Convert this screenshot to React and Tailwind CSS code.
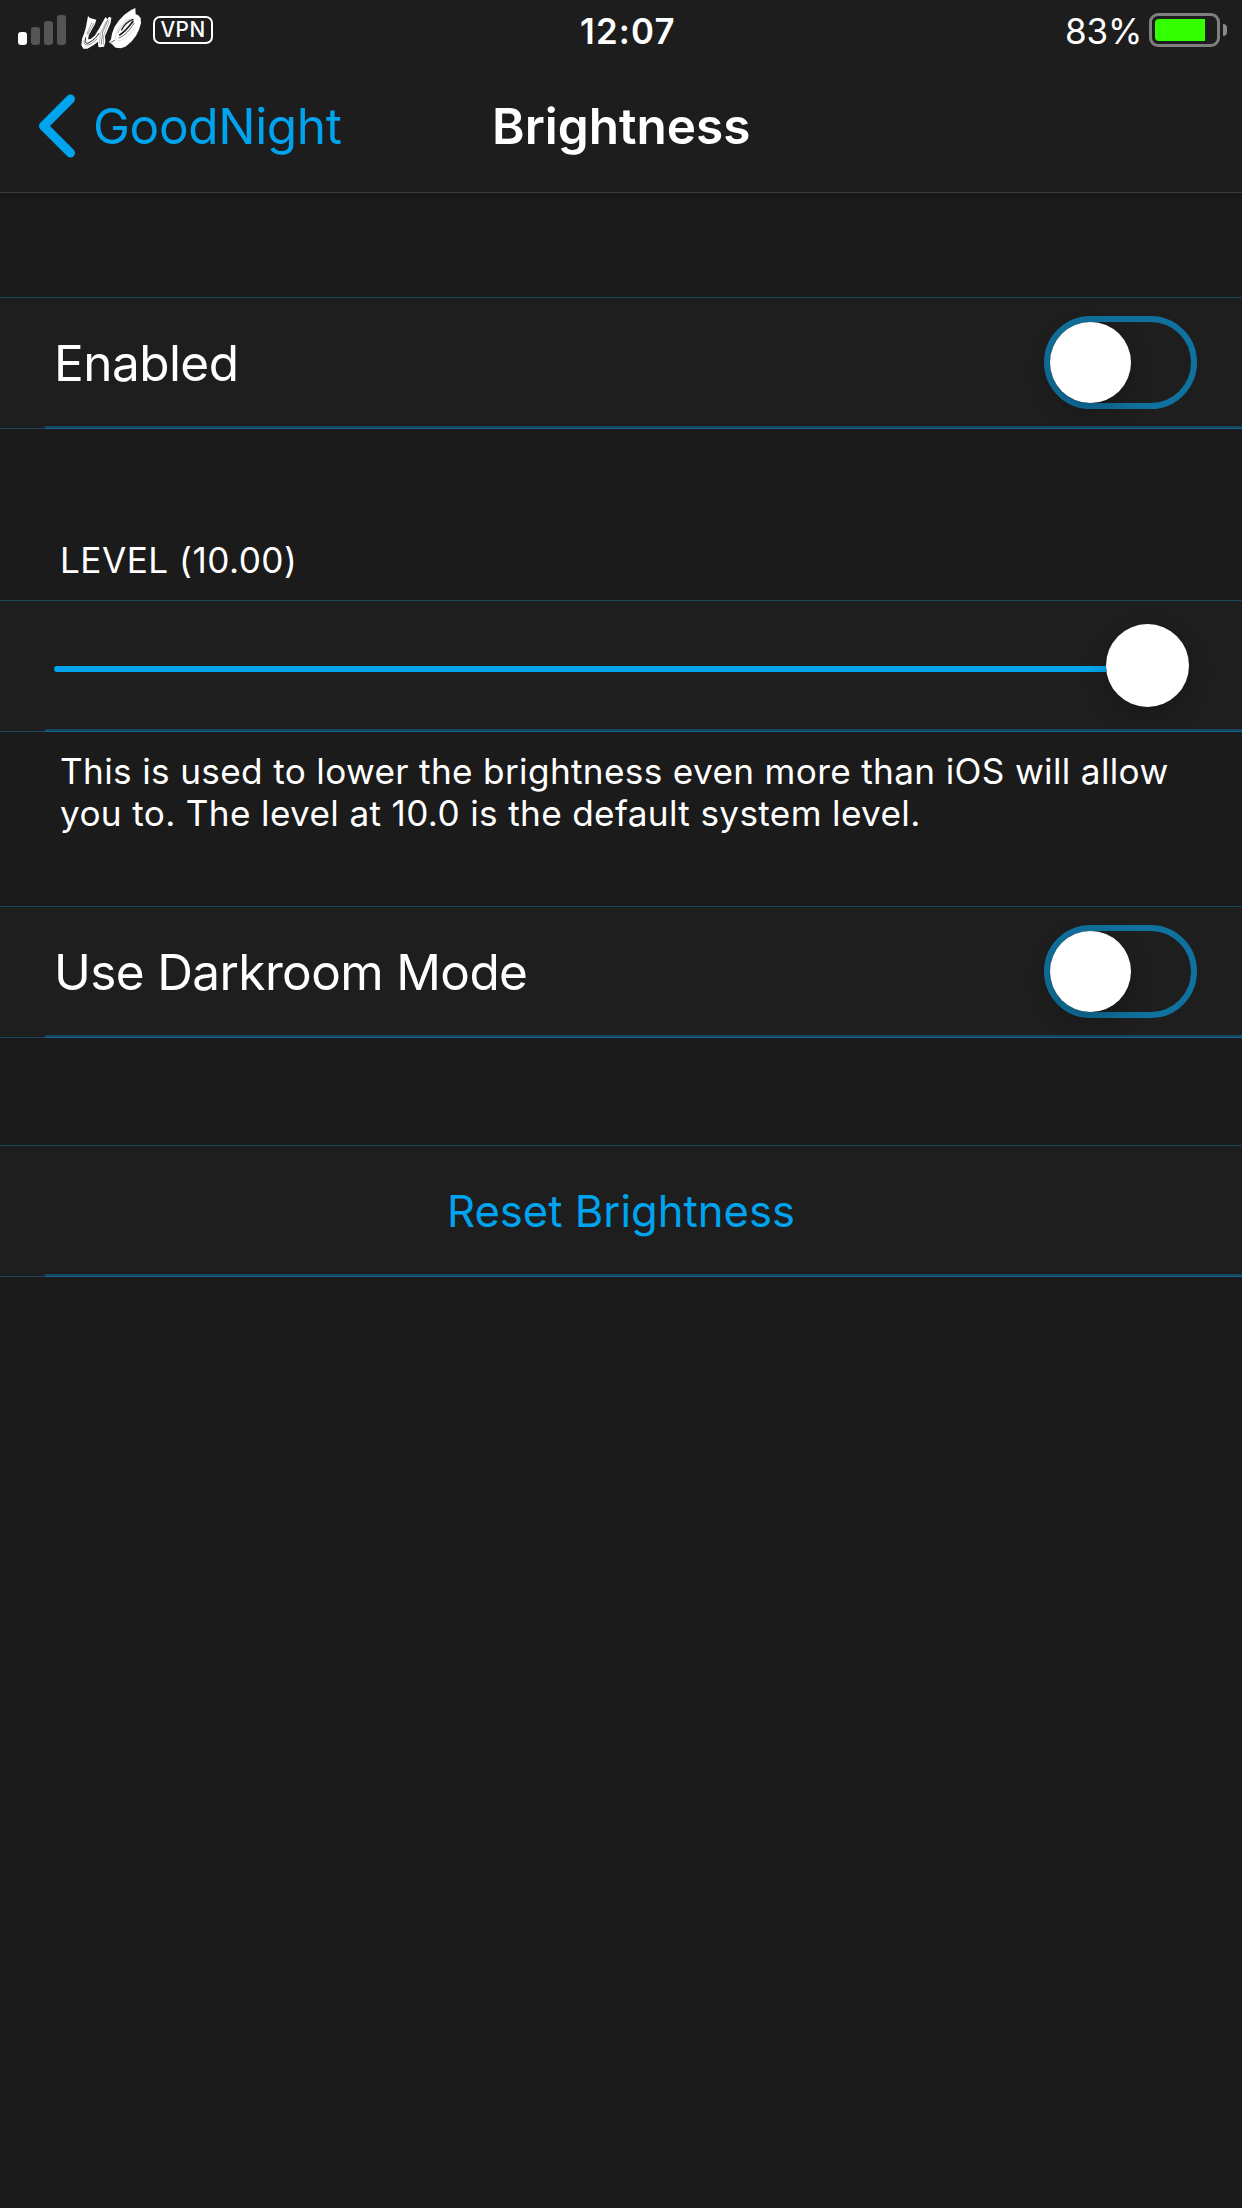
function SignalBars() {
  return (
    <div className="flex h-[30px] w-12 items-end gap-1">
      <span className="h-[13px] w-[9px] rounded-[3px] bg-white" />
      <span className="h-[18px] w-[9px] rounded-[3px] bg-[#555555]" />
      <span className="h-6 w-[9px] rounded-[3px] bg-[#555555]" />
      <span className="h-[30px] w-[9px] rounded-[3px] bg-[#555555]" />
    </div>
  );
}

function CarrierLogo() {
  return (
    <svg width="72" height="52" viewBox="0 0 216 156" fill="none" aria-label="Carrier">
      <g fill="#ffffff">
        <path d="M36 42 L42 48 L61 53 L57 66 L39 98 L36 112 L44 111 L56 101 L70 79 L85 51 L89 45 L94 52 L99 44 L106 47 L104 62 L96 82 L87 103 L88 120 L84 134 L71 136 L67 134 L66 119 L52 130 L34 140 L22 140 L16 130 L18 111 L25 92 L30 74 Z" />
        <path d="M178 18 L179 37 L186 39 L194 48 L195 64 L189 83 L180 101 L166 119 L148 134 L134 139 L119 137 L108 127 L99 121 L105 112 L108 95 L115 76 L128 56 L145 38 L164 25 Z" />
      </g>
      <g stroke="#1c1c1c" strokeLinecap="round">
        <path d="M137 84 C143 70 158 57 171 52" strokeWidth="4" />
        <path d="M131 99 C145 91 160 73 171 58" strokeWidth="5" />
        <path d="M129 108 C147 102 163 82 174 64" strokeWidth="2" />
        <path d="M126 92 C133 75 148 60 163 51" strokeWidth="1.2" opacity=".8" />
        <path d="M118 112 C118 90 132 66 153 51" strokeWidth="1" opacity=".5" />
        <path d="M126 117 C144 115 164 98 177 76" strokeWidth="1" opacity=".5" />
        <path d="M29 107 C26 119 29 128 39 122 C52 115 63 105 69 94" strokeWidth="3" />
        <path d="M24 117 C23 132 36 131 46 125 L63 111" strokeWidth="1.5" />
        <path d="M47 63 L32 97 M53 65 L36 97" strokeWidth="1.2" />
        <path d="M96 53 L80 90 L76 126" strokeWidth="1.6" />
        <path d="M91 58 L73 94 L70 123 M100 56 L83 101 L82 127" strokeWidth="1" />
        <path d="M104 122 L116 115" strokeWidth="2" />
      </g>
    </svg>
  );
}

function Battery() {
  return (
    <div className="flex items-center gap-[3px]">
      <div className="h-[34px] w-[71px] rounded-[9px] border-[3px] border-[#7f7f7f] p-[3px]">
        <div className="h-[22px] w-[50px] rounded-l-[4px] bg-[#33ff00]" />
      </div>
      <div className="h-3 w-1 rounded-r-full bg-[#8a8a8a]" />
    </div>
  );
}

function StatusBar() {
  return (
    <div className="flex h-[60px] items-start">
      <div className="flex w-[580px] items-start pl-[18px]">
        <div className="pt-[15px]"><SignalBars /></div>
        <div className="ml-[10px] pt-[2px]"><CarrierLogo /></div>
        <div className="ml-[5px] mt-4 flex h-7 w-[60px] justify-center rounded-[7px] border-2 border-white text-[20.8px] font-medium leading-6 tracking-[0.45px]">
          VPN
        </div>
      </div>
      <div className="w-[485px] pt-[10px] text-[34.8px] font-semibold leading-[42px] tracking-[1.2px]">12:07</div>
      <div className="w-[84px] pt-[10px] text-[35px] leading-[42px] tracking-[-0.14px]">83%</div>
      <div className="pt-[13px]"><Battery /></div>
    </div>
  );
}

function NavBar() {
  return (
    <header className="border-b border-[#3b3b3b] bg-[#1d1d1d]">
      <StatusBar />
      <div className="flex h-[132px] items-center text-[49.5px] leading-[60px]">
        <button className="flex w-[492px] items-center pl-[38px] text-[#00a3ee]">
          <svg width="38" height="64" viewBox="0 0 38 64" fill="none" stroke="currentColor" strokeWidth="9" strokeLinecap="round" strokeLinejoin="round">
            <path d="M32.5 5 L5.5 32 L32.5 59" />
          </svg>
          <span className="ml-[17px] tracking-[-0.35px]">GoodNight</span>
        </button>
        <h1 className="font-semibold">Brightness</h1>
      </div>
    </header>
  );
}

function Cell({ children }) {
  return (
    <div className="border-t border-[#17465a] bg-[#1e1e1e]">
      <div className="flex h-32 items-start">{children}</div>
      <div className="ml-[45px] h-[2px] bg-[#15475d]" />
      <div className="flex h-px bg-[#17465a]">
        <div className="ml-[45px] grow bg-[#12658c]" />
      </div>
    </div>
  );
}

function ToggleRow({ label, tracking }) {
  return (
    <Cell>
      <span className={`grow pl-[54px] pt-[35px] text-[49.5px] leading-[60px] ${tracking}`}>{label}</span>
      <button
        role="switch"
        aria-checked="false"
        aria-label={label}
        className="mr-[45px] mt-[18px] h-[93px] w-[153px] rounded-full border-[6px] border-[#0f719e]"
      >
        <span className="block size-[81px] rounded-full bg-white shadow-[0_9px_24px_rgba(0,0,0,0.22)]" />
      </button>
    </Cell>
  );
}

function LevelSlider() {
  return (
    <Cell>
      <div className="ml-[54px] mt-[23px] flex h-[83px] w-[1135px]">
        <div className="mt-[42px] h-[6px] grow rounded-l-full bg-[#00a3ee]" />
        <div className="size-[83px] rounded-full bg-white shadow-[0_9px_24px_rgba(0,0,0,0.22)]" />
      </div>
    </Cell>
  );
}

export default function App() {
  return (
    <div className="h-[2208px] w-[1242px] overflow-hidden bg-[#1b1b1b] font-[Inter,sans-serif] text-white">
      <NavBar />
      <main>
        <div className="h-[104px] bg-[linear-gradient(#181818,#1b1b1b_8px)]" />
        <ToggleRow label="Enabled" tracking="tracking-[-0.55px]" />
        <h2 className="pb-[19px] pl-[60px] pt-[110px] text-[35.2px] leading-[42px] tracking-[0.47px]">LEVEL (10.00)</h2>
        <LevelSlider />
        <p className="whitespace-nowrap pb-[72px] pl-[60px] pt-[18px] text-[35.2px] leading-[42px] tracking-[0.33px]">
          This is used to lower the brightness even more than iOS will allow
          <br />
          you to. The level at 10.0 is the default system level.
        </p>
        <ToggleRow label="Use Darkroom Mode" tracking="tracking-[-0.62px]" />
        <div className="h-[107px]" />
        <Cell>
          <button className="grow pt-[39px] text-center text-[43.6px] leading-[53px] text-[#00a3ee]">Reset Brightness</button>
        </Cell>
      </main>
    </div>
  );
}
